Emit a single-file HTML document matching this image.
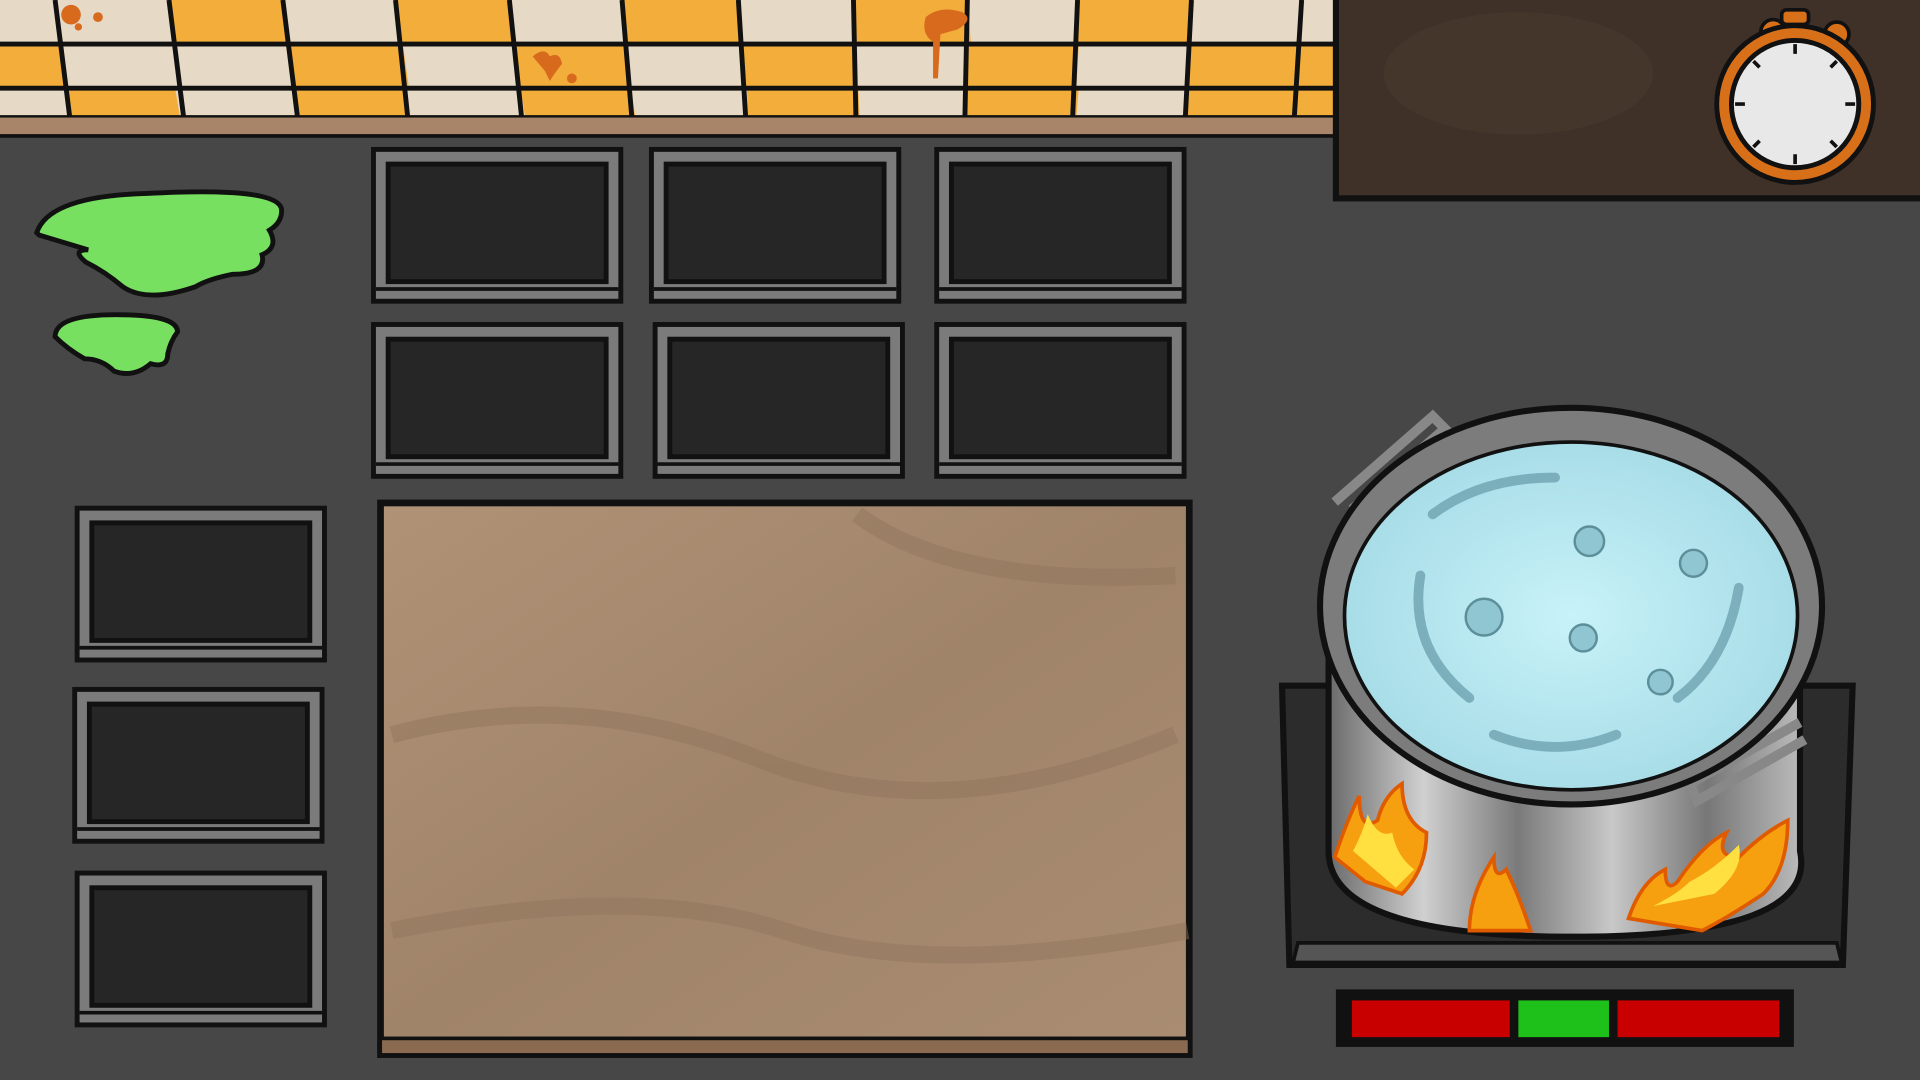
<!DOCTYPE html>
<html><head><style>html,body{margin:0;padding:0;background:#474747;overflow:hidden}svg{display:block}</style></head><body>
<svg width="1920" height="1080" viewBox="0 0 1568 882" xmlns="http://www.w3.org/2000/svg">
<defs>
<linearGradient id="wood" x1="0" y1="0" x2="1" y2="1"><stop offset="0" stop-color="#b09276"/><stop offset=".5" stop-color="#a0846a"/><stop offset="1" stop-color="#a98c72"/></linearGradient>
<linearGradient id="pot" x1="0" x2="1"><stop offset="0" stop-color="#6a6a6a"/><stop offset=".2" stop-color="#d0d0d0"/><stop offset=".4" stop-color="#7a7a7a"/><stop offset=".6" stop-color="#c8c8c8"/><stop offset=".8" stop-color="#777"/><stop offset="1" stop-color="#bbb"/></linearGradient>
<radialGradient id="water" cx=".5" cy=".5" r=".5"><stop offset="0" stop-color="#c8f2f8"/><stop offset="1" stop-color="#a8dde8"/></radialGradient>
</defs>
<rect width="1568" height="882" fill="#474747"/>
<rect x="0" y="0" width="1090" height="96" fill="#e6d9c5"/>
<g fill="#f2ad3a">
<path d="M138 0h93l5 36h-93z M323 0h93l5 36h-93z M508 0h95l3 36h-95z M697 0h93l3 36h-93z M880 0h93l-2 36h-93z"/>
<path d="M0 36h48l5 36h-53z M236 36h93l5 36h-93z M421 36h90l4 36h-90z M606 36h91l2 36h-91z M790 36h91l-2 36h-91z M971 36h119v36h-121z"/>
<path d="M53 72h90l4 24h-90z M240 72h91l4 24h-91z M425 72h90l4 24h-90z M610 72h91l1 24h-91z M790 72h91l-2 24h-91z M971 72h119v24h-122z"/>
</g>
<g stroke="#111" stroke-width="4" fill="none">
<path d="M0 36H1090M0 72H1090M0 96H1090"/>
<path d="M45 0l12 96M138 0l12 96M231 0l12 96M323 0l10 96M416 0l10 96M508 0l8 96M603 0l6 96M697 0l2 96M790 0l-2 96M880 0l-4 96M973 0l-5 96M1063 0l-6 96"/>
</g>
<rect x="0" y="96" width="1090" height="14" fill="#a88468"/>
<path d="M0 111H1090" stroke="#111" stroke-width="3"/>
<g fill="#d86a1e"><circle cx="58" cy="12" r="8"/><circle cx="80" cy="14" r="4"/><circle cx="64" cy="22" r="3"/><path d="M435 46q10-8 14 0 8-4 10 6l-6 8-4 6-4-8z"/><circle cx="467" cy="64" r="4"/><path d="M756 14q12-10 30-4 10 6-4 14l-14 4-2 36-4 0 0-30q-10-6-6-20z"/></g>
<rect x="1091" y="-4" width="482" height="166" fill="#3f3128" stroke="#111" stroke-width="5"/>
<ellipse cx="1240" cy="60" rx="110" ry="50" fill="#4a3a2d" opacity=".6"/>
<circle cx="1448" cy="26" r="10" fill="#d8701a" stroke="#111" stroke-width="3"/>
<circle cx="1500" cy="28" r="10" fill="#d8701a" stroke="#111" stroke-width="3"/>
<rect x="1455" y="8" width="22" height="12" rx="4" fill="#d8701a" stroke="#111" stroke-width="3"/>
<circle cx="1466" cy="85" r="64" fill="#d8701a" stroke="#111" stroke-width="4"/>
<circle cx="1466" cy="85" r="52" fill="#e8e8e8" stroke="#111" stroke-width="4"/>
<g stroke="#111" stroke-width="3"><path d="M1466 36v8M1466 126v8M1417 85h8M1507 85h8M1432 50l5 5M1500 50l-5 5M1432 120l5-5M1500 120l-5-5"/></g>
<path d="M30 190q10-30 90-32 110-6 110 14 0 10-10 16 8 14-6 20 4 16-24 16-20 4-30 10-40 14-60 0-14-12-30-20-12-10 2-10-20-6-40-12z" fill="#78e060" stroke="#111" stroke-width="4"/>
<path d="M45 275q0-18 50-18 50 0 50 14-6 8-8 18 0 12-14 8-14 12-30 6-10-10-24-10-14-8-24-18z" fill="#78e060" stroke="#111" stroke-width="4"/>
<g stroke="#111" stroke-width="4">
<g transform="translate(305,122)"><rect width="202" height="124" fill="#7b7b7b"/><rect x="12" y="12" width="178" height="96" fill="#262626"/><path d="M2 114h198" stroke-width="3"/></g>
<g transform="translate(532,122)"><rect width="202" height="124" fill="#7b7b7b"/><rect x="12" y="12" width="178" height="96" fill="#262626"/><path d="M2 114h198" stroke-width="3"/></g>
<g transform="translate(765,122)"><rect width="202" height="124" fill="#7b7b7b"/><rect x="12" y="12" width="178" height="96" fill="#262626"/><path d="M2 114h198" stroke-width="3"/></g>
<g transform="translate(305,265)"><rect width="202" height="124" fill="#7b7b7b"/><rect x="12" y="12" width="178" height="96" fill="#262626"/><path d="M2 114h198" stroke-width="3"/></g>
<g transform="translate(535,265)"><rect width="202" height="124" fill="#7b7b7b"/><rect x="12" y="12" width="178" height="96" fill="#262626"/><path d="M2 114h198" stroke-width="3"/></g>
<g transform="translate(765,265)"><rect width="202" height="124" fill="#7b7b7b"/><rect x="12" y="12" width="178" height="96" fill="#262626"/><path d="M2 114h198" stroke-width="3"/></g>
<g transform="translate(63,415)"><rect width="202" height="124" fill="#7b7b7b"/><rect x="12" y="12" width="178" height="96" fill="#262626"/><path d="M2 114h198" stroke-width="3"/></g>
<g transform="translate(61,563)"><rect width="202" height="124" fill="#7b7b7b"/><rect x="12" y="12" width="178" height="96" fill="#262626"/><path d="M2 114h198" stroke-width="3"/></g>
<g transform="translate(63,713)"><rect width="202" height="124" fill="#7b7b7b"/><rect x="12" y="12" width="178" height="96" fill="#262626"/><path d="M2 114h198" stroke-width="3"/></g>
</g>
<rect x="310" y="410" width="662" height="452" fill="#8a6a50" stroke="#111" stroke-width="4"/>
<rect x="312" y="412" width="658" height="436" fill="url(#wood)" stroke="#111" stroke-width="3"/>
<g fill="none" stroke="#8f735a" stroke-width="14" opacity=".45"><path d="M320 600q150-40 300 20t340-20"/><path d="M320 760q200-40 320 0t330 0"/><path d="M700 420q80 60 260 50"/></g>
<path d="M1047 560h466l-8 228h-452z" fill="#2c2c2c" stroke="#111" stroke-width="5"/>
<path d="M1060 770h440l4 16h-448z" fill="#555" stroke="#111" stroke-width="3"/>
<path d="M1085 495v200q0 70 200 70t185-70v-200z" fill="url(#pot)" stroke="#111" stroke-width="5"/>
<path d="M1090 410l80-70 10 10-76 66" fill="none" stroke="#888" stroke-width="8"/>
<path d="M1470 590l-90 50 6 14 88-50" fill="none" stroke="#888" stroke-width="8"/>
<ellipse cx="1283" cy="495" rx="205" ry="162" fill="#7c7c7c" stroke="#111" stroke-width="5"/>
<ellipse cx="1283" cy="503" rx="185" ry="142" fill="url(#water)" stroke="#111" stroke-width="3"/>
<g fill="none" stroke="#6ea3b0" stroke-width="8" stroke-linecap="round" opacity=".8"><path d="M1160 470q-10 60 40 100"/><path d="M1420 480q-10 60-50 90"/><path d="M1220 600q50 20 100 0"/><path d="M1170 420q40-30 100-30"/></g>
<g fill="#8fc6d2" stroke="#5d8f9a" stroke-width="2"><circle cx="1298" cy="442" r="12"/><circle cx="1383" cy="460" r="11"/><circle cx="1212" cy="504" r="15"/><circle cx="1293" cy="521" r="11"/><circle cx="1356" cy="557" r="10"/></g>
<g fill="#f6a010" stroke="#e05a00" stroke-width="3">
<path d="M1090 700q10-30 20-50 0 30 15 20 5-20 20-30 0 30 20 40 0 30-20 50l-30-10z"/>
<path d="M1200 760q0-30 20-60 0 20 10 10 10 20 20 50z"/>
<path d="M1330 750q10-30 30-40 0 20 10 10 20-30 40-40-10 20 10 20 20-20 40-30 0 40-20 60-30 20-50 30z"/>
</g>
<g fill="#ffe040"><path d="M1105 695q8-15 12-30 8 20 20 15 4 20 18 30l-15 15z"/><path d="M1350 740q20-10 30-20 20-10 40-30 5 20-20 40z"/></g>
<rect x="1091" y="808" width="374" height="47" fill="#111"/>
<rect x="1104" y="817" width="129" height="30" fill="#c90000"/>
<rect x="1240" y="817" width="74" height="30" fill="#1ec01a"/>
<rect x="1321" y="817" width="132" height="30" fill="#c90000"/>
</svg>
</body></html>
